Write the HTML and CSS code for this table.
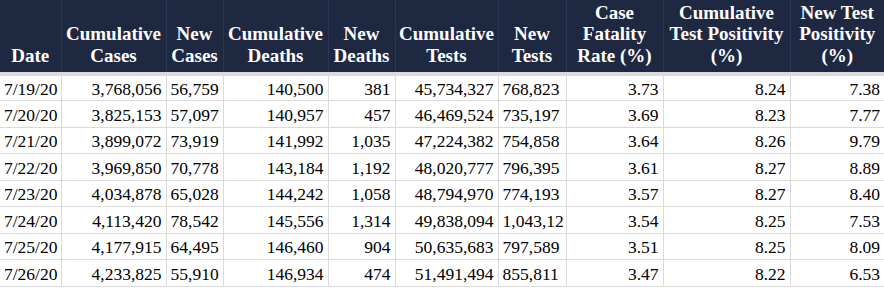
FILE: index.html
```html
<!DOCTYPE html>
<html lang="en">
<head>
    <meta charset="UTF-8">
    <title>COVID-19 Daily Totals</title>
    <link rel="stylesheet" href="styles.css">
</head>
<body>
    <table class="stats">
        <colgroup>
            <col class="c-date">
            <col class="c-cum">
            <col class="c-new">
            <col class="c-cum">
            <col class="c-newd">
            <col class="c-cumt">
            <col class="c-newt">
            <col class="c-cfr">
            <col class="c-ctp">
            <col class="c-ntp">
        </colgroup>
        <thead>
            <tr>
                <th>Date</th>
                <th>Cumulative Cases</th>
                <th>New Cases</th>
                <th>Cumulative Deaths</th>
                <th>New Deaths</th>
                <th>Cumulative Tests</th>
                <th>New Tests</th>
                <th>Case Fatality Rate (%)</th>
                <th>Cumulative Test Positivity (%)</th>
                <th>New Test Positivity (%)</th>
            </tr>
        </thead>
        <tbody>
            <tr><td class="left">7/19/20</td><td>3,768,056</td><td class="left">56,759</td><td>140,500</td><td>381</td><td>45,734,327</td><td class="left">768,823</td><td>3.73</td><td>8.24</td><td>7.38</td></tr>
            <tr><td class="left">7/20/20</td><td>3,825,153</td><td class="left">57,097</td><td>140,957</td><td>457</td><td>46,469,524</td><td class="left">735,197</td><td>3.69</td><td>8.23</td><td>7.77</td></tr>
            <tr><td class="left">7/21/20</td><td>3,899,072</td><td class="left">73,919</td><td>141,992</td><td>1,035</td><td>47,224,382</td><td class="left">754,858</td><td>3.64</td><td>8.26</td><td>9.79</td></tr>
            <tr><td class="left">7/22/20</td><td>3,969,850</td><td class="left">70,778</td><td>143,184</td><td>1,192</td><td>48,020,777</td><td class="left">796,395</td><td>3.61</td><td>8.27</td><td>8.89</td></tr>
            <tr><td class="left">7/23/20</td><td>4,034,878</td><td class="left">65,028</td><td>144,242</td><td>1,058</td><td>48,794,970</td><td class="left">774,193</td><td>3.57</td><td>8.27</td><td>8.40</td></tr>
            <tr><td class="left">7/24/20</td><td>4,113,420</td><td class="left">78,542</td><td>145,556</td><td>1,314</td><td>49,838,094</td><td class="left">1,043,12</td><td>3.54</td><td>8.25</td><td>7.53</td></tr>
            <tr><td class="left">7/25/20</td><td>4,177,915</td><td class="left">64,495</td><td>146,460</td><td>904</td><td>50,635,683</td><td class="left">797,589</td><td>3.51</td><td>8.25</td><td>8.09</td></tr>
            <tr><td class="left">7/26/20</td><td>4,233,825</td><td class="left">55,910</td><td>146,934</td><td>474</td><td>51,491,494</td><td class="left">855,811</td><td>3.47</td><td>8.22</td><td>6.53</td></tr>
        </tbody>
    </table>
</body>
</html>
```

FILE: styles.css
```css
body {
    margin: 0;
    background: #fff;
    font-family: "Liberation Serif", "Times New Roman", serif;
}

.stats {
    width: 884px;
    table-layout: fixed;
    border-collapse: collapse;
}

.c-date { width: 61px; }
.c-cum { width: 105px; }
.c-new { width: 57px; }
.c-newd { width: 67px; }
.c-cumt { width: 103px; }
.c-newt { width: 68px; }
.c-cfr { width: 97px; }
.c-ctp { width: 127px; }
.c-ntp { width: 94px; }

.stats th {
    box-sizing: border-box;
    height: 74px;
    padding: 0 3px 6px;
    background: #1f2841;
    color: #fff;
    font-size: 19px;
    font-weight: bold;
    line-height: 21.5px;
    text-align: center;
    vertical-align: bottom;
    border-left: 1px solid #2e3752;
    border-bottom: 4px solid #dadada;
}

.stats th:first-child {
    border-left: none;
}

.stats td {
    box-sizing: border-box;
    height: 26.5px;
    padding: 2px 4px 0;
    font-size: 17.5px;
    line-height: 20px;
    color: #000;
    text-align: right;
    white-space: nowrap;
    overflow: hidden;
    border: 1px solid #dadada;
}

.stats td:first-child {
    border-left: none;
}

.stats td:last-child {
    border-right: none;
}

.stats td.left {
    text-align: left;
}
```
